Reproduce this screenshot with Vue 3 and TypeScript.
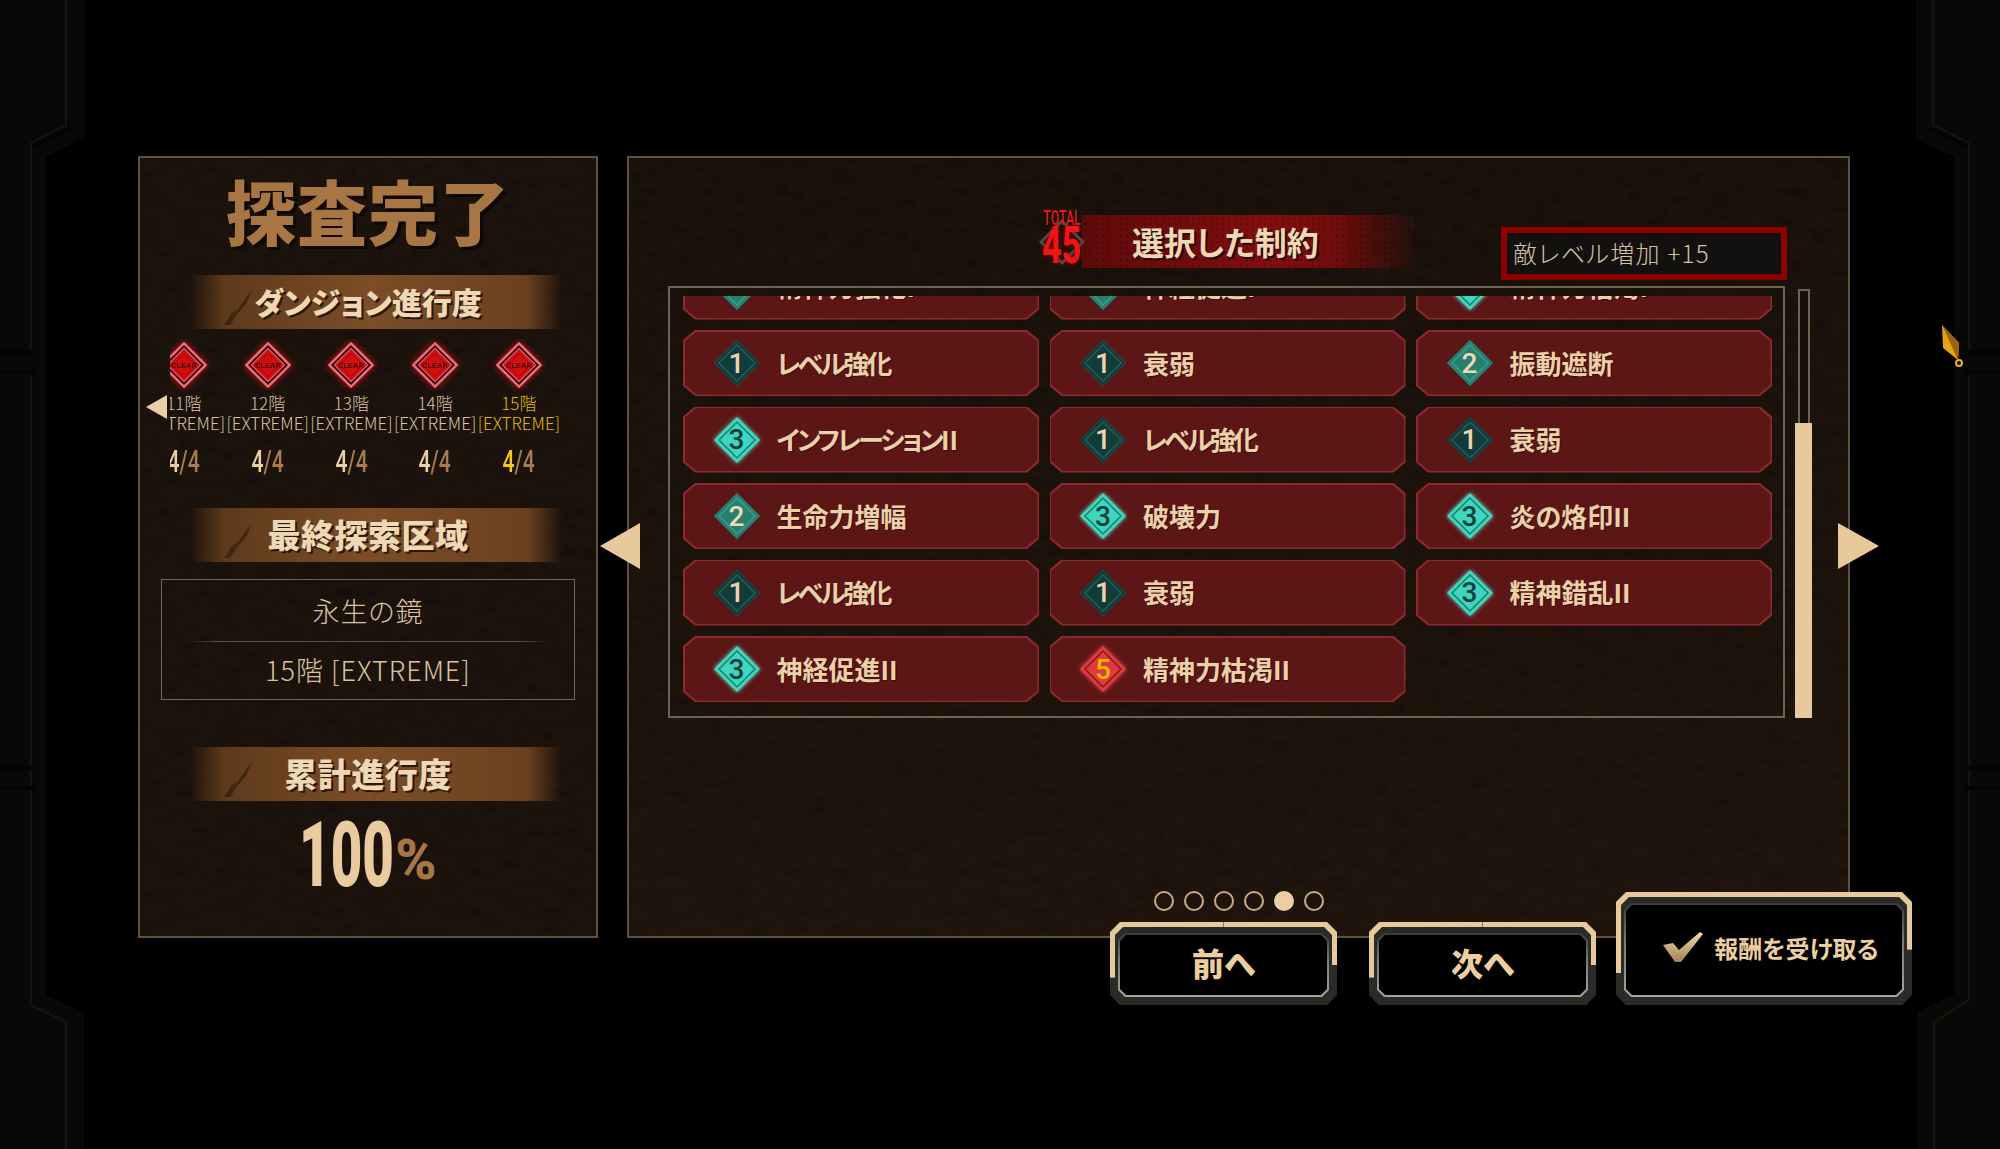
<script setup lang="ts">
interface Curse {
  level: number
  name: string
  tight?: boolean
  suffix?: string
}

const floors = [
  { no: '11階', active: false },
  { no: '12階', active: false },
  { no: '13階', active: false },
  { no: '14階', active: false },
  { no: '15階', active: true },
]

const curses: Curse[] = [
  { level: 2, name: '精神力強化I' },
  { level: 2, name: '神経促進I' },
  { level: 3, name: '精神力枯渇I' },
  { level: 1, name: 'レベル強化', tight: true },
  { level: 1, name: '衰弱' },
  { level: 2, name: '振動遮断' },
  { level: 3, name: 'インフレーション', tight: true, suffix: 'II' },
  { level: 1, name: 'レベル強化', tight: true },
  { level: 1, name: '衰弱' },
  { level: 2, name: '生命力増幅' },
  { level: 3, name: '破壊力' },
  { level: 3, name: '炎の烙印II' },
  { level: 1, name: 'レベル強化', tight: true },
  { level: 1, name: '衰弱' },
  { level: 3, name: '精神錯乱II' },
  { level: 3, name: '神経促進II' },
  { level: 5, name: '精神力枯渇II' },
]

const dots = [false, false, false, false, true, false]
</script>

<template>
  <div class="stage">
    <!-- side frame, only just visible on the black -->
    <svg class="frame" width="2000" height="1149" viewBox="0 0 2000 1149">
      <path class="frame-fill" d="M0 0H85V137L46 157V996L84 1012V1149H0Z" />
      <path class="frame-line" d="M66 0V125L31 143V350M31 375V1005L66 1022V1149" />
      <path class="frame-dark" d="M0 352H36M0 372H36M34 146L70 128M0 768H36M0 788H36" />
      <path class="frame-fill" d="M2000 0H1916V140L1954 157V994L1917 1012V1149H2000Z" />
      <path class="frame-line" d="M1933 0V125L1969 143V350M1969 375V1000L1934 1022V1149" />
      <path class="frame-dark" d="M1964 352H2000M1964 372H2000M1966 146L1930 128M1964 768H2000M1964 788H2000" />
      <defs>
        <filter id="grain" x="0" y="0" width="100%" height="100%">
          <feTurbulence type="fractalNoise" baseFrequency="0.05 0.1" numOctaves="4" seed="7" />
          <feColorMatrix values="0 0 0 0 0  0 0 0 0 0  0 0 0 0 0  1.6 0 0 0 -0.72" />
        </filter>
      </defs>
    </svg>

    <div class="main">
      <section class="panel left">
        <svg class="grain"><rect width="100%" height="100%" filter="url(#grain)" /></svg>
        <h1 class="title">探査完了</h1>

        <div class="ribbon first">
          <svg class="scratch" width="60" height="54" viewBox="0 0 60 54">
            <path d="M24 50L32 38L37 34L33 42L45 24L52 15L46 29L38 38L30 50Z" />
          </svg>
          <span>ダンジョン進行度</span>
        </div>

        <div class="floor-view">
          <div class="floor-track">
            <div v-for="f in floors" :key="f.no" class="floor" :class="{ active: f.active }">
              <svg class="emblem" width="50" height="50" viewBox="0 0 60 60">
                <polygon points="30,2 58,30 30,58 2,30" fill="#ee6f7c" />
                <polygon points="30,6 54,30 30,54 6,30" fill="#2a0408" />
                <polygon points="30,9 51,30 30,51 9,30" fill="#e85a68" />
                <polygon points="30,11 49,30 30,49 11,30" fill="#d01010" />
                <polygon points="30,16 44,30 30,44 16,30" fill="none" stroke="#7c0508" stroke-width="0.8" />
                <text x="30" y="33" text-anchor="middle" class="emblem-text">CLEAR</text>
              </svg>
              <div class="floor-no">{{ f.no }}</div>
              <div class="floor-rank">[EXTREME]</div>
              <div class="floor-count"><span class="count-in"><b>4</b>/4</span></div>
            </div>
          </div>
        </div>

        <div class="ribbon">
          <svg class="scratch" width="60" height="54" viewBox="0 0 60 54">
            <path d="M24 50L32 38L37 34L33 42L45 24L52 15L46 29L38 38L30 50Z" />
          </svg>
          <span>最終探索区域</span>
        </div>

        <div class="area">
          <div class="area-line">永生の鏡</div>
          <div class="area-rule"></div>
          <div class="area-line">15階 [EXTREME]</div>
        </div>

        <div class="ribbon total">
          <svg class="scratch" width="60" height="54" viewBox="0 0 60 54">
            <path d="M24 50L32 38L37 34L33 42L45 24L52 15L46 29L38 38L30 50Z" />
          </svg>
          <span>累計進行度</span>
        </div>

        <div class="percent"><span class="pct-num">100</span><span class="pct-sign">%</span></div>

        <div class="floor-arrow"></div>
      </section>

      <section class="panel right">
        <svg class="grain"><rect width="100%" height="100%" filter="url(#grain)" /></svg>

        <header class="head">
          <div class="badge">
            <svg class="badge-bg" width="46" height="46" viewBox="0 0 46 46">
              <polygon points="23,2 44,23 23,44 2,23" fill="none" stroke="#5a4a44" stroke-width="3" />
            </svg>
            <span class="badge-total">TOTAL</span>
            <span class="badge-num">45</span>
          </div>
          <div class="head-ribbon">選択した制約</div>
          <div class="effect">敵レベル増加 +15</div>
        </header>

        <div class="list-wrap">
          <div class="list-box">
            <div class="list-view">
              <div class="list-grid">
                <div v-for="(c, i) in curses" :key="i" class="curse">
                  <div class="curse-in">
                    <span class="gem" :class="'lv' + c.level">
                      <svg width="48" height="48" viewBox="0 0 48 48">
                        <polygon class="gem-out" points="24,1 47,24 24,47 1,24" />
                        <polygon class="gem-line" points="24,6 42,24 24,42 6,24" />
                      </svg>
                      <span class="gem-num">{{ c.level }}</span>
                    </span>
                    <span class="curse-name"><span :class="{ tight: c.tight }">{{ c.name }}</span>{{ c.suffix }}</span>
                  </div>
                </div>
              </div>
            </div>
          </div>
          <div class="scroll">
            <div class="scroll-track"></div>
            <div class="scroll-thumb"></div>
          </div>
        </div>

        <div class="dots">
          <span v-for="(d, i) in dots" :key="i" class="dot" :class="{ on: d }"></span>
        </div>

        <div class="actions">
          <button class="btn small">
            <span class="btn-mid"><span class="btn-ring"><span class="btn-face">前へ</span></span></span>
          </button>
          <button class="btn small">
            <span class="btn-mid"><span class="btn-ring"><span class="btn-face">次へ</span></span></span>
          </button>
          <button class="btn big">
            <span class="btn-mid">
              <span class="btn-ring">
                <span class="btn-face reward">
                  <svg width="40" height="30" viewBox="0 0 40 30">
                    <defs>
                      <linearGradient id="chk" x1="0" y1="0" x2="0" y2="1">
                        <stop offset="0" stop-color="#f4dab0" />
                        <stop offset="1" stop-color="#a08052" />
                      </linearGradient>
                    </defs>
                    <polygon points="0,13 10,11 16,18 37,0 40,2 18,30 12,30" fill="url(#chk)" />
                  </svg>
                  <span>報酬を受け取る</span>
                </span>
              </span>
            </span>
          </button>
        </div>
      </section>
    </div>

    <div class="page-arrow prev"></div>
    <div class="page-arrow next"></div>

    <svg class="cursor" width="30" height="46" viewBox="0 0 30 46">
      <polygon points="3,1 20,19 19,36 4,24" fill="#e5a412" />
      <polygon points="3,1 20,19 19,36" fill="#9a6410" />
      <circle cx="20" cy="39" r="3" fill="none" stroke="#efb21c" stroke-width="2" />
    </svg>
  </div>
</template>

<style>
html,
body {
  margin: 0;
  background: #000;
}
</style>

<style scoped>
.stage {
  position: relative;
  width: 2000px;
  height: 1149px;
  overflow: hidden;
  background: #000;
  font-family: 'Noto Sans CJK JP', 'Noto Sans', sans-serif;
  font-feature-settings: 'palt';
  color: #e8cba0;
}
.frame {
  position: absolute;
  left: 0;
  top: 0;
}
.frame-fill {
  fill: #0a0806;
}
.frame-line {
  fill: none;
  stroke: #17130f;
  stroke-width: 2;
}
.frame-dark {
  fill: none;
  stroke: #030302;
  stroke-width: 3;
}
.main {
  position: relative;
  display: flex;
  gap: 29px;
  padding: 156px 0 0 138px;
}
.panel {
  position: relative;
  box-sizing: border-box;
  height: 782px;
  border: 2px solid #5e5140;
  background: #1c130c;
}
.grain {
  position: absolute;
  inset: 0;
  width: 100%;
  height: 100%;
  opacity: 0.28;
  pointer-events: none;
}
.left {
  display: flex;
  flex-direction: column;
  align-items: center;
  width: 460px;
}
.right {
  width: 1223px;
  background: linear-gradient(#1a120b, #20150d);
}

.title {
  position: relative;
  margin: 11px 0 0;
  height: 82px;
  line-height: 82px;
  font-size: 70px;
  font-weight: 900;
  letter-spacing: 1px;
  color: #a87644;
  text-shadow: 3px 3px 0 #0c0703;
}

.ribbon {
  position: relative;
  flex: none;
  width: 388px;
  height: 54px;
  line-height: 52px;
  text-align: center;
  font-size: 33px;
  font-weight: 900;
  letter-spacing: 0.5px;
  color: #efd8b4;
  text-shadow: 2px 2px 0 #2a170a;
  background: linear-gradient(90deg, transparent 4%, #5e3a1c 13%, #7c4d26 50%, #6a4120 91%, transparent);
}
.ribbon.first {
  margin-top: 24px;
  font-size: 30px;
  letter-spacing: 0;
}
.ribbon.total {
  margin-top: 47px;
}
.ribbon span {
  position: relative;
}
.scratch {
  position: absolute;
  left: 26px;
  top: 0;
}
.scratch path {
  fill: #1d120a;
  opacity: 0.5;
}

.floor-view {
  position: relative;
  align-self: flex-start;
  flex: none;
  margin: 10px 0 0 30px;
  width: 400px;
  height: 169px;
  overflow: hidden;
}
.floor-track {
  display: flex;
  margin-left: -28px;
  width: 428px;
}
.floor {
  flex: none;
  width: 83.75px;
  text-align: center;
  color: #dcc4a0;
}
.floor.active {
  color: #e0bc00;
}
.emblem {
  display: block;
  margin: 1px auto 0;
  filter: drop-shadow(0 0 3px #e01010);
}
.emblem-text {
  font-family: 'Liberation Sans', sans-serif;
  font-size: 9px;
  font-weight: 700;
  fill: #4a0306;
}
.floor-no {
  margin-top: 3px;
  height: 20px;
  line-height: 20px;
  font-size: 17px;
  font-weight: 300;
}
.floor-rank {
  height: 19px;
  line-height: 19px;
  font-size: 17px;
  font-weight: 300;
  white-space: nowrap;
}
.floor-count {
  margin-top: 15px;
  height: 30px;
  line-height: 30px;
  font-family: Roboto, 'Liberation Sans', sans-serif;
  font-size: 31px;
  font-weight: 500;
  color: #a87c50;
}
.count-in {
  display: inline-block;
  transform: scaleX(0.68);
}
.count-in b {
  font-weight: 500;
  color: #ecd0a6;
}
.floor.active .count-in b {
  color: #f4cd10;
}
.floor-arrow {
  position: absolute;
  left: 6px;
  top: 237px;
  border-style: solid;
  border-width: 12px 21px 12px 0;
  border-color: transparent #ecd0a6 transparent transparent;
}

.area {
  position: relative;
  flex: none;
  box-sizing: border-box;
  width: 414px;
  height: 121px;
  margin-top: 17px;
  padding-top: 12px;
  border: 1.5px solid #756651;
  text-align: center;
}
.area-line {
  height: 38px;
  line-height: 38px;
  font-size: 27px;
  font-weight: 300;
  letter-spacing: 1px;
  color: #dcc3a0;
}
.area-rule {
  height: 1px;
  margin: 11px 26px 9px;
  background: linear-gradient(90deg, transparent, #5d5040 8%, #5d5040 92%, transparent);
}

.percent {
  position: relative;
  display: flex;
  align-items: flex-end;
  justify-content: center;
  height: 90px;
  margin-top: 9px;
  font-family: Roboto, 'Liberation Sans', sans-serif;
  font-weight: 900;
}
.pct-num {
  display: block;
  width: 94px;
  font-size: 91px;
  line-height: 90px;
  white-space: nowrap;
  color: #e9cb9f;
  transform: scaleX(0.6);
  transform-origin: left;
}
.pct-sign {
  display: block;
  margin-left: 2px;
  font-size: 56px;
  line-height: 80px;
  color: #a87644;
}

.head {
  position: relative;
  display: flex;
  height: 65px;
  margin: 57px 0 0 413px;
}
.badge {
  position: relative;
  flex: none;
  display: flex;
  flex-direction: column;
  align-items: center;
  width: 40px;
  margin-top: -5px;
  font-family: Roboto, 'Liberation Sans', sans-serif;
  color: #f01414;
}
.badge-bg {
  position: absolute;
  left: -3px;
  top: 9px;
}
.badge-total {
  position: relative;
  height: 16px;
  line-height: 16px;
  font-size: 20px;
  font-weight: 500;
  transform: scaleX(0.62);
}
.badge-num {
  position: relative;
  height: 40px;
  line-height: 40px;
  font-size: 52px;
  font-weight: 700;
  transform: scaleX(0.66);
  text-shadow: 0 0 5px #a00808;
}
.head-ribbon {
  flex: none;
  box-sizing: border-box;
  width: 338px;
  height: 53px;
  padding-left: 50px;
  line-height: 52px;
  font-size: 32px;
  font-weight: 700;
  color: #efd8b4;
  text-shadow: 2px 2px 0 #2a0808;
  background:
    radial-gradient(circle, rgba(0, 0, 0, 0.22) 1.2px, transparent 1.6px) 0 0 / 6px 6px,
    linear-gradient(90deg, #5e0a0a, #820e0e 55%, #720c0c 75%, transparent);
}
.effect {
  flex: none;
  box-sizing: border-box;
  align-self: flex-end;
  width: 286px;
  height: 53px;
  margin-left: 81px;
  padding-left: 6px;
  border: 6px solid #8c0000;
  line-height: 39px;
  font-size: 24px;
  font-weight: 300;
  letter-spacing: 1.3px;
  color: #d9c2a0;
  background: #121110;
}

.list-wrap {
  position: relative;
  display: flex;
  gap: 10px;
  height: 432px;
  margin: 6px 0 0 39px;
}
.list-box {
  box-sizing: border-box;
  width: 1117px;
  height: 432px;
  padding: 8px 0 0 13px;
  border: 2px solid #6f634f;
}
.list-view {
  height: 420px;
  overflow: hidden;
}
.list-grid {
  display: grid;
  grid-template-columns: repeat(3, 356px);
  grid-auto-rows: 66px;
  gap: 10.5px;
  margin-top: -42.5px;
}
.curse {
  padding: 1.5px;
  background: #8c2a2c;
  clip-path: polygon(12px 0, calc(100% - 12px) 0, 100% 10px, 100% calc(100% - 10px), calc(100% - 12px) 100%, 12px 100%, 0 calc(100% - 10px), 0 10px);
}
.curse-in {
  display: flex;
  align-items: center;
  box-sizing: border-box;
  height: 100%;
  padding-left: 28px;
  background: #5d1616;
  clip-path: polygon(12px 0, calc(100% - 12px) 0, 100% 10px, 100% calc(100% - 10px), calc(100% - 12px) 100%, 12px 100%, 0 calc(100% - 10px), 0 10px);
}
.gem {
  position: relative;
  flex: none;
  display: flex;
  align-items: center;
  justify-content: center;
  width: 48px;
  height: 48px;
}
.gem svg {
  position: absolute;
  left: 0;
  top: 0;
}
.gem-num {
  position: relative;
  font-family: Roboto, 'Liberation Sans', sans-serif;
  font-size: 28px;
  font-weight: 500;
}
.gem-line {
  fill: none;
  stroke-width: 1.5;
}
.lv1 .gem-out {
  fill: #123b39;
  stroke: #1c4a46;
}
.lv1 .gem-line {
  stroke: #245e58;
}
.lv1 .gem-num {
  color: #ecd3ad;
}
.lv2 .gem-out {
  fill: #27806f;
  stroke: #1f6a5c;
}
.lv2 .gem-line {
  stroke: #3a9c88;
}
.lv2 .gem-num {
  color: #f0d8b4;
}
.lv3 svg {
  filter: drop-shadow(0 0 2px #5fe8d0);
}
.lv3 .gem-out {
  fill: #3fd6bf;
}
.lv3 .gem-line {
  stroke: #18806f;
}
.lv3 .gem-num {
  color: #11403e;
}
.lv5 svg {
  filter: drop-shadow(0 0 2px #f05050);
}
.lv5 .gem-out {
  fill: #dd3b3f;
}
.lv5 .gem-line {
  stroke: #8f1518;
}
.lv5 .gem-num {
  color: #f6b800;
}
.curse-name {
  margin-left: 16px;
  margin-top: -2px;
  font-size: 26px;
  font-weight: 700;
  white-space: nowrap;
  color: #ecd0a8;
  text-shadow: 1px 1px 0 #3a0c0c;
}
.tight {
  letter-spacing: -2.8px;
}

.scroll {
  display: flex;
  flex-direction: column;
  align-items: center;
  width: 17px;
  padding-top: 3px;
}
.scroll-track {
  box-sizing: border-box;
  width: 12px;
  height: 134px;
  border: 2px solid #6f634f;
  border-bottom: 0;
  background: #17100a;
}
.scroll-thumb {
  flex: 1;
  width: 17px;
  background: #e8c99b;
}

.dots {
  position: relative;
  display: flex;
  gap: 10px;
  margin: 173px 0 0 525px;
}
.dot {
  box-sizing: border-box;
  width: 20px;
  height: 20px;
  border: 2px solid #c9ac82;
  border-radius: 50%;
}
.dot.on {
  background: #eccfa0;
  border-color: #eccfa0;
}

.actions {
  position: absolute;
  left: 481px;
  bottom: -69px;
  display: flex;
  align-items: flex-end;
  gap: 32px;
}
.btn {
  display: block;
  box-sizing: border-box;
  padding: 5px 5px 0;
  border: 0;
  font-family: inherit;
  font-feature-settings: 'palt';
  color: #eccfa0;
  clip-path: polygon(10px 0, calc(100% - 10px) 0, 100% 10px, 100% calc(100% - 10px), calc(100% - 10px) 100%, 10px 100%, 0 calc(100% - 10px), 0 10px);
}
.small {
  width: 227px;
  height: 83px;
  background:
    linear-gradient(#e8c99b, #e8c99b) left top / 50% 67% no-repeat,
    linear-gradient(#e8c99b, #e8c99b) right top / 50% 52% no-repeat,
    #2a2a28;
}
.big {
  width: 296px;
  height: 113px;
  margin-left: -12px;
  background:
    linear-gradient(#e8c99b, #e8c99b) left top / 50% 72% no-repeat,
    linear-gradient(#e8c99b, #e8c99b) right top / 50% 51% no-repeat,
    #2a2a28;
}
.btn-mid {
  display: block;
  box-sizing: border-box;
  height: 100%;
  padding: 6px 3px 8px;
  background: #2a2a28;
  clip-path: polygon(8px 0, calc(100% - 8px) 0, 100% 8px, 100% 100%, 0 100%, 0 8px);
}
.btn-ring {
  display: block;
  box-sizing: border-box;
  height: 100%;
  padding: 2px;
  background: linear-gradient(#3a3a38, #7a7a70 40%, #a3a397);
  clip-path: polygon(7px 0, calc(100% - 7px) 0, 100% 7px, 100% calc(100% - 7px), calc(100% - 7px) 100%, 7px 100%, 0 calc(100% - 7px), 0 7px);
}
.btn-face {
  display: flex;
  align-items: center;
  justify-content: center;
  box-sizing: border-box;
  height: 100%;
  padding-bottom: 6px;
  background: #000;
  font-size: 32px;
  font-weight: 900;
  clip-path: polygon(6px 0, calc(100% - 6px) 0, 100% 6px, 100% calc(100% - 6px), calc(100% - 6px) 100%, 6px 100%, 0 calc(100% - 6px), 0 6px);
}
.reward {
  gap: 11px;
  padding: 0 0 6px 14px;
  font-size: 24px;
  font-weight: 700;
}

.page-arrow {
  position: absolute;
  top: 523px;
  border-style: solid;
  border-width: 23px 0;
  border-color: transparent;
}
.prev {
  left: 600px;
  border-right: 40px solid #e8c99b;
}
.next {
  left: 1838px;
  border-left: 41px solid #e8c99b;
}
.cursor {
  position: absolute;
  left: 1939px;
  top: 324px;
}
</style>
